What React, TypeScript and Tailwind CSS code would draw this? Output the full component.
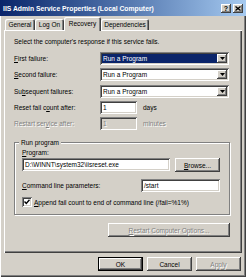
import React from 'react'

const raised =
  'shadow-[inset_-1px_-1px_#404040,inset_1px_1px_#ffffff,inset_-2px_-2px_#808080,inset_2px_2px_#d4d0c8]'
const sunken =
  'shadow-[inset_1px_1px_#808080,inset_-1px_-1px_#ffffff,inset_2px_2px_#404040,inset_-2px_-2px_#d4d0c8]'
const dim = 'text-[#808080] [text-shadow:1px_1px_#ffffff]'

function Btn({ children, primary, disabled, className = '' }: { children: React.ReactNode; primary?: boolean; disabled?: boolean; className?: string }) {
  const edge = primary
    ? 'shadow-[inset_0_0_0_1px_#000000,inset_-2px_-2px_#404040,inset_2px_2px_#ffffff,inset_-3px_-3px_#808080]'
    : raised
  return (
    <div className={`flex h-[14px] items-center justify-center bg-[#d4d0c8] ${edge} ${disabled ? dim : ''} ${className}`}>
      {children}
    </div>
  )
}

function Combo({ selected }: { selected?: boolean }) {
  return (
    <div className={`flex h-[13px] w-[129px] items-center bg-white p-[2px] ${sunken}`}>
      <div className={`flex h-full flex-1 items-center pl-[1px] ${selected ? 'bg-[#0a246a] text-white' : ''}`}>
        Run a Program
      </div>
      <div className={`flex h-full w-[10px] items-center justify-center bg-[#d4d0c8] ${raised}`}>
        <svg width="5" height="3" viewBox="0 0 5 3">
          <path d="M0 0h5L2.5 3z" fill="#000" />
        </svg>
      </div>
    </div>
  )
}

function Field({ value, width, disabled }: { value: string; width: string; disabled?: boolean }) {
  return (
    <div className={`flex h-[13px] items-center px-[3px] ${width} ${sunken} ${disabled ? `bg-[#d4d0c8] ${dim}` : 'bg-white'}`}>
      {value}
    </div>
  )
}

function Row({ label, children, disabled }: { label: React.ReactNode; children: React.ReactNode; disabled?: boolean }) {
  return (
    <div className="flex h-[13px] items-center">
      <span className={`w-[86px] ${disabled ? dim : ''}`}>{label}</span>
      {children}
    </div>
  )
}

export default function App() {
  return (
    <div className="flex h-[277px] w-[246px] flex-col bg-[#d4d0c8] font-[Liberation_Sans,Arial,sans-serif] text-[6.5px] leading-[9px] text-black shadow-[inset_1px_0_#ffffff,inset_-1px_-1px_#404040,inset_-2px_-2px_#808080]">
      {/* title bar */}
      <div className="flex h-[16px] items-center bg-gradient-to-r from-[#0a246a] to-[#a6caf0] pl-[3px] pr-[3px]">
        <span className="flex-1 text-[6.8px] font-bold text-white">IIS Admin Service Properties (Local Computer)</span>
        <div className="flex gap-[2px]">
          <div className={`flex h-[9px] w-[10px] items-center justify-center bg-[#d4d0c8] text-[7px] font-bold ${raised}`}>?</div>
          <div className={`flex h-[9px] w-[10px] items-center justify-center bg-[#d4d0c8] ${raised}`}>
            <svg width="6" height="5" viewBox="0 0 6 5">
              <path d="M0.5 0.5L5.5 4.5M5.5 0.5L0.5 4.5" stroke="#000" strokeWidth="1.3" />
            </svg>
          </div>
        </div>
      </div>

      <div className="flex flex-col px-[4px]">
        {/* tabs */}
        <div className="relative z-10 mt-[1px] flex h-[13px] items-end pl-[1px]">
          <div className="flex h-[11px] w-[30px] items-center justify-center rounded-t-[2px] shadow-[inset_1px_1px_#ffffff,inset_-1px_0_#404040,inset_-2px_0_#808080]">General</div>
          <div className="flex h-[11px] w-[29px] items-center justify-center rounded-t-[2px] shadow-[inset_1px_1px_#ffffff,inset_-1px_0_#404040,inset_-2px_0_#808080]">Log On</div>
          <div className="-mb-[1px] flex h-[14px] w-[37px] items-start justify-center rounded-t-[2px] bg-[#d4d0c8] pt-[2px] shadow-[inset_1px_1px_#ffffff,inset_-1px_0_#404040,inset_-2px_0_#808080]">Recovery</div>
          <div className="flex h-[11px] w-[48px] items-center justify-center rounded-t-[2px] shadow-[inset_1px_1px_#ffffff,inset_-1px_0_#404040,inset_-2px_0_#808080]">Dependencies</div>
        </div>

        {/* tab page */}
        <div className="flex flex-col pb-[16px] pl-[10px] pr-[12px] pt-[6px] shadow-[inset_1px_1px_#ffffff,inset_-1px_-1px_#404040,inset_-2px_-2px_#808080]">
          <div className="h-[12px] leading-[12px]">Select the computer's response if this service fails.</div>

          <div className="mt-[4px]">
            <Row label={<><u>F</u>irst failure:</>}>
              <Combo selected />
            </Row>
          </div>
          <div className="mt-[3px]">
            <Row label={<><u>S</u>econd failure:</>}>
              <Combo />
            </Row>
          </div>
          <div className="mt-[4px]">
            <Row label={<>Su<u>b</u>sequent failures:</>}>
              <Combo />
            </Row>
          </div>
          <div className="mt-[3px]">
            <Row label={<>Reset fail c<u>o</u>unt after:</>}>
              <Field value="1" width="w-[37px]" />
              <span className="ml-[6px]">days</span>
            </Row>
          </div>
          <div className="mt-[3px]">
            <Row disabled label={<>Restart ser<u>v</u>ice after:</>}>
              <Field value="1" width="w-[37px]" disabled />
              <span className={`ml-[6px] ${dim}`}>minutes</span>
            </Row>
          </div>

          {/* Run program group */}
          <div className="relative mt-[12px] flex w-[216px] flex-col border border-[#808080] pb-[7px] pl-[7px] pr-[8px] pt-[5px] shadow-[inset_1px_1px_#ffffff,1px_1px_#ffffff]">
            <span className="absolute -top-[6px] left-[4px] bg-[#d4d0c8] px-[2px] leading-[11px]">Run program</span>
            <div className="h-[10px] leading-[10px]">
              <u>P</u>rogram:
            </div>
            <div className="flex items-start gap-[5px]">
              <Field value="D:\WINNT\system32\iisreset.exe" width="w-[148px]" />
              <Btn className="w-[45px]">
                <span>
                  <u>B</u>rowse...
                </span>
              </Btn>
            </div>
            <div className="mt-[7px] flex h-[13px] items-center">
              <span className="w-[119px]">
                <u>C</u>ommand line parameters:
              </span>
              <Field value="/start" width="w-[79px]" />
            </div>
            <div className="mt-[5px] flex h-[10px] items-center gap-[1px]">
              <div className={`flex h-[10px] w-[10px] items-center justify-center bg-white ${sunken}`}>
                <svg width="6" height="6" viewBox="0 0 6 6">
                  <path d="M0.5 2.5L2.3 4.5L5.5 0.8" stroke="#000" strokeWidth="1.4" fill="none" />
                </svg>
              </div>
              <span className="ml-[1px]">
                <u>A</u>ppend fail count to end of command line (/fail=%1%)
              </span>
            </div>
          </div>

          <div className="mt-[8px] flex justify-end">
            <Btn disabled className="w-[122px]">
              <span>
                <u>R</u>estart Computer Options...
              </span>
            </Btn>
          </div>
        </div>
      </div>

      {/* dialog buttons */}
      <div className="mt-[4px] flex justify-end gap-[4px] pr-[5px]">
        <Btn primary className="w-[45px]">OK</Btn>
        <Btn className="w-[45px]">Cancel</Btn>
        <Btn disabled className="w-[45px]">Apply</Btn>
      </div>
    </div>
  )
}
